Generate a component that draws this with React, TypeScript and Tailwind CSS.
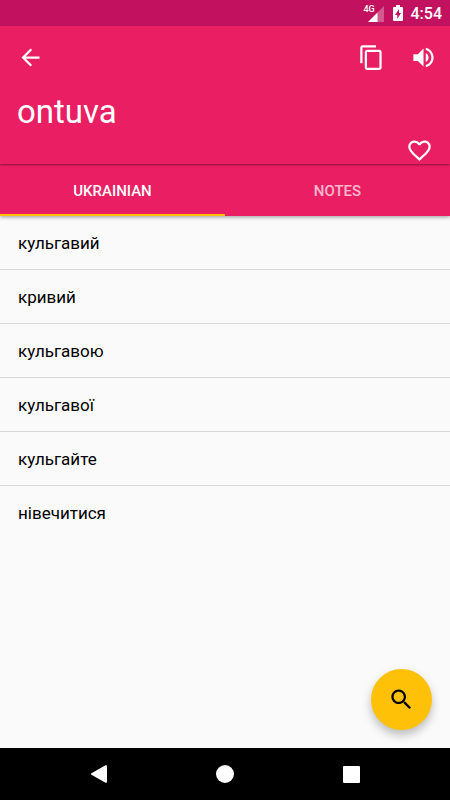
import React, { useState } from "react";

const words = [
  "кульгавий",
  "кривий",
  "кульгавою",
  "кульгавої",
  "кульгайте",
  "нівечитися",
];

const tabs = ["UKRAINIAN", "NOTES"];

function Icon({ d }: { d: string }) {
  return (
    <svg
      className="size-[27px]"
      viewBox="0 0 24 24"
      fill="currentColor"
      aria-hidden="true"
    >
      <path d={d} />
    </svg>
  );
}

function StatusBar() {
  return (
    <div className="flex h-[26px] items-center justify-end bg-[#c2125f] pr-2 text-white">
      <div className="relative mr-2 h-[18px] w-5">
        <span className="absolute top-0 left-0 text-[9px] leading-[10px] font-medium">
          4G
        </span>
        <svg className="size-full" viewBox="0 0 20 18" aria-hidden="true">
          <path d="M20 2v16H13V9z" fill="white" fillOpacity=".3" />
          <path d="M13.500 8.500V18H4z" fill="white" />
        </svg>
      </div>
      <svg
        className="mr-[7px] h-[18px] w-3"
        viewBox="0 0 12 18"
        aria-hidden="true"
      >
        <path
          fill="white"
          fillRule="evenodd"
          d="M4 1h4v2h2q1 0 1 1v12q0 1-1 1H2q-1 0-1-1V4q0-1 1-1h2zM7 5l-4 6h2.300v4L9 9H7z"
        />
      </svg>
      <span className="pt-px text-base font-medium">4:54</span>
    </div>
  );
}

function Header() {
  return (
    <header className="relative z-10 flex flex-col bg-[#e91e63] px-[17px] pt-[18px] text-white shadow-[0_1px_2px_rgba(0,0,0,0.4)]">
      <div className="flex items-center justify-between">
        <button aria-label="Back">
          <Icon d="M20 11H7.830l5.590-5.590L12 4l-8 8 8 8 1.410-1.410L7.830 13H20v-2z" />
        </button>
        <div className="-mr-1 flex gap-[25px]">
          <button aria-label="Copy">
            <Icon d="M16 1H4c-1.100 0-2 .9-2 2v14h2V3h12V1zm3 4H8c-1.100 0-2 .9-2 2v14c0 1.100.9 2 2 2h11c1.100 0 2-.9 2-2V7c0-1.100-.9-2-2-2zm0 16H8V7h11v14z" />
          </button>
          <button aria-label="Listen">
            <Icon d="M3 9v6h4l5 5V4L7 9H3zm13.500 3c0-1.770-1.020-3.290-2.500-4.030v8.050c1.480-.73 2.500-2.250 2.500-4.020zM14 3.230v2.060c2.890.86 5 3.540 5 6.710s-2.110 5.850-5 6.710v2.060c4.010-.91 7-4.490 7-8.770s-2.990-7.860-7-8.770z" />
          </button>
        </div>
      </div>
      <h1 className="mt-[21px] text-[33px] leading-10">ontuva</h1>
      <button aria-label="Add to favourites" className="mt-[5px] self-end">
        <Icon d="M16.500 3c-1.740 0-3.410.81-4.500 2.090C10.910 3.810 9.240 3 7.500 3 4.420 3 2 5.420 2 8.500c0 3.780 3.400 6.860 8.550 11.540L12 21.350l1.450-1.320C18.600 15.360 22 12.280 22 8.500 22 5.420 19.580 3 16.500 3zm-4.400 15.550l-.1.100-.1-.1C7.140 14.240 4 11.390 4 8.500 4 6.500 5.500 5 7.500 5c1.540 0 3.040.99 3.570 2.360h1.870C13.460 5.990 14.960 5 16.500 5c2 0 3.500 1.500 3.500 3.500 0 2.890-3.140 5.740-7.900 10.050z" />
      </button>
    </header>
  );
}

function NavigationBar() {
  return (
    <nav className="flex h-[52px] items-center bg-black px-9 text-white">
      <button aria-label="System back" className="flex flex-1 justify-center">
        <svg className="size-[18px]" viewBox="0 0 18 18" fill="currentColor">
          <path d="M1.500 8.200 15.500.3q1.500-.6 1.500 1v15.400q0 1.600-1.500 1L1.500 9.800q-1.200-.8 0-1.600z" />
        </svg>
      </button>
      <button aria-label="Home" className="flex flex-1 justify-center">
        <span className="size-[18px] rounded-full bg-white" />
      </button>
      <button aria-label="Recent apps" className="flex flex-1 justify-center">
        <span className="size-[17px] rounded-[1px] bg-white" />
      </button>
    </nav>
  );
}

export default function App() {
  const [active, setActive] = useState(0);

  return (
    <div className="flex min-h-screen flex-col bg-[#fafafa] font-[Roboto,sans-serif]">
      <StatusBar />
      <Header />

      <div
        role="tablist"
        className="flex h-[52px] bg-[#e91e63] text-white shadow-[0_1px_4px_rgba(0,0,0,0.4)]"
      >
        {tabs.map((tab, i) => (
          <button
            key={tab}
            role="tab"
            aria-selected={active === i}
            onClick={() => setActive(i)}
            className={`flex-1 border-b-2 pt-1 text-[15px] font-medium ${
              active === i
                ? "border-[#ffc107]"
                : "border-transparent text-white/70"
            }`}
          >
            {tab}
          </button>
        ))}
      </div>

      <main className="relative flex-1">
        {active === 0 && (
          <ul className="divide-y divide-[#d8d8d8]">
            {words.map((word) => (
              <li
                key={word}
                className="flex h-[54px] items-center px-[18px] pt-[2px] text-[17px] text-black"
              >
                {word}
              </li>
            ))}
          </ul>
        )}
        <button
          aria-label="Search"
          className="absolute right-[18px] bottom-[18px] flex size-[61px] items-center justify-center rounded-full bg-[#ffc107] text-black shadow-[0_5px_10px_rgba(0,0,0,0.25)]"
        >
          <Icon d="M15.500 14h-.79l-.28-.27C15.410 12.590 16 11.110 16 9.500 16 5.910 13.090 3 9.500 3S3 5.910 3 9.500 5.910 16 9.500 16c1.610 0 3.090-.59 4.230-1.570l.27.28v.79l5 4.990L20.490 19l-4.990-5zm-6 0C7.010 14 5 11.990 5 9.500S7.010 5 9.500 5 14 7.010 14 9.500 11.990 14 9.500 14z" />
        </button>
      </main>

      <NavigationBar />
    </div>
  );
}
